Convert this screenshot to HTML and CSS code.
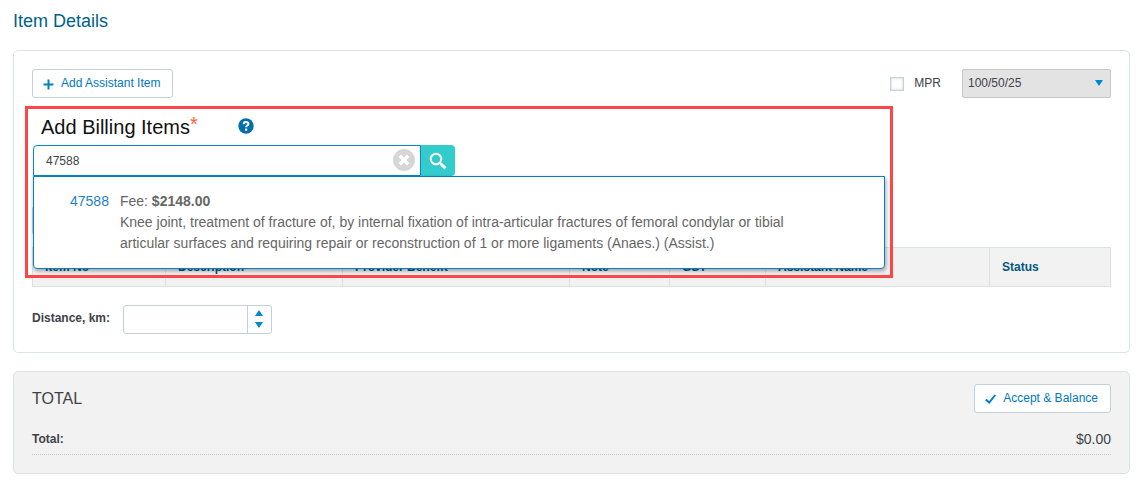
FILE: index.html
```html
<!DOCTYPE html>
<html lang="en">
<head>
  <meta charset="UTF-8" />
  <meta name="viewport" content="width=device-width, initial-scale=1.0" />
  <title>Item Details</title>
  <link rel="stylesheet" href="styles.css">
</head>
<body>
  <h1>Item Details</h1>

  <section class="panel">
    <div class="toolbar">
      <button type="button" class="btn">
        <svg width="11" height="11" viewBox="0 0 11 11"><path d="M5.5 0.5v10M0.5 5.5h10" stroke="#0082c3" stroke-width="2" /></svg>
        Add Assistant Item
      </button>
      <div class="mpr">
        <input type="checkbox" id="mpr" />
        <label for="mpr">MPR</label>
        <div class="select-wrap">
          <select id="mprRate" aria-label="MPR rate">
            <option>100/50/25</option>
          </select>
          <svg class="caret" width="8" height="6" viewBox="0 0 8 6"><path d="M0 0h8L4 6z" fill="#0088cc" /></svg>
        </div>
      </div>
    </div>

    <div class="billing">
      <div class="billing-title">
        <label for="itemSearch">Add Billing Items<span class="required">*</span></label>
        <a href="#" class="help" aria-label="Help">
          <svg width="16" height="16" viewBox="0 0 16 16">
            <circle cx="8" cy="8" r="7.7" fill="#006fae" />
            <path d="M5.7 6.2C5.7 4.7 6.6 3.9 8 3.9s2.4.8 2.4 2c0 1.6-2.3 1.6-2.3 3.4" fill="none" stroke="#fff" stroke-width="2" />
            <rect x="7" y="10.6" width="2.2" height="2.1" fill="#fff" />
          </svg>
        </a>
      </div>

      <div class="search">
        <div class="search-box">
          <input type="text" id="itemSearch" value="47588" />
          <button type="button" class="clear" aria-label="Clear">
            <svg width="22" height="22" viewBox="0 0 22 22">
              <circle cx="11" cy="11" r="11" fill="#d6d6d6" />
              <path d="M6.8 6.8l8.4 8.4M15.2 6.8l-8.4 8.4" stroke="#fff" stroke-width="3.4" />
            </svg>
          </button>
        </div>
        <button type="button" class="search-btn" aria-label="Search">
          <svg width="18" height="18" viewBox="0 0 18 18">
            <circle cx="7" cy="7" r="5.3" fill="none" stroke="#fff" stroke-width="2" />
            <path d="M10.8 10.8l1.4 1.4" stroke="#fff" stroke-width="2" />
            <path d="M11.8 11.8l4.6 4.6" stroke="#fff" stroke-width="3" />
          </svg>
        </button>

        <div class="results">
          <a href="#" class="result-code">47588</a>
          <div class="result-text">
            Fee: <strong>$2148.00</strong><br>
            Knee joint, treatment of fracture of, by internal fixation of intra-articular fractures of femoral condylar or tibial articular surfaces and requiring repair or reconstruction of 1 or more ligaments (Anaes.) (Assist.)
          </div>
        </div>
      </div>
    </div>

    <div class="table-tools"></div>

    <table>
      <thead>
        <tr>
          <th class="col-item">Item No</th>
          <th class="col-desc">Description</th>
          <th class="col-benefit">Provider Benefit</th>
          <th class="col-note">Note</th>
          <th class="col-gst">GST</th>
          <th class="col-assistant">Assistant Name</th>
          <th>Status</th>
        </tr>
      </thead>
    </table>

    <div class="distance">
      <label for="distance">Distance, km:</label>
      <div class="spinner">
        <input type="number" id="distance" />
        <div class="spinner-btns">
          <button type="button" aria-label="Increase"><svg width="8" height="6" viewBox="0 0 8 6"><path d="M0 6h8L4 0z" fill="#0088cc" /></svg></button>
          <button type="button" aria-label="Decrease"><svg width="8" height="6" viewBox="0 0 8 6"><path d="M0 0h8L4 6z" fill="#0088cc" /></svg></button>
        </div>
      </div>
    </div>
  </section>

  <section class="panel total">
    <div class="total-head">
      <h2>TOTAL</h2>
      <button type="button" class="btn">
        <svg width="11" height="10" viewBox="0 0 11 10"><path d="M0.8 5.4l3.4 3.2L10.2 1" fill="none" stroke="#0082c3" stroke-width="2" /></svg>
        Accept &amp; Balance
      </button>
    </div>
    <div class="total-row">
      <strong>Total:</strong>
      <span>$0.00</span>
    </div>
  </section>
</body>
</html>
```
FILE: styles.css
```css
* {
  box-sizing: border-box;
}
body {
  margin: 0;
  padding: 10px 8px 10px 13px;
  font-family: "Liberation Sans", Arial, sans-serif;
  font-size: 12px;
  color: #404248;
  background: #fff;
}
h1 {
  margin: 0 0 18px;
  font-size: 18px;
  font-weight: normal;
  line-height: 22px;
  color: #005f8d;
}
input, select, button {
  font-family: inherit;
  font-size: 12px;
  color: inherit;
  margin: 0;
}
svg {
  display: block;
}
.panel {
  border: 1px solid #dae3e9;
  border-radius: 5px;
  padding: 18px;
}
.toolbar, .mpr, .total-head, .total-row, .distance {
  display: flex;
  align-items: center;
}
.toolbar, .total-head, .total-row {
  justify-content: space-between;
}
.btn {
  display: flex;
  align-items: center;
  gap: 7px;
  height: 29px;
  padding: 0 12px 2px 10px;
  background: #fff;
  border: 1px solid #c3d0da;
  border-radius: 3px;
  color: #0078bd;
}
.btn svg {
  margin-top: 3px;
}
.mpr input {
  appearance: none;
  width: 14px;
  height: 14px;
  margin-right: 10px;
  background: #fff;
  border: 1px solid #c5d2dc;
  box-shadow: inset 0 0 3px #ccc;
}
.mpr label {
  padding-bottom: 2px;
}
.select-wrap {
  position: relative;
  margin-left: 21px;
}
.select-wrap select {
  appearance: none;
  display: block;
  width: 149px;
  height: 29px;
  padding: 0 5px 2px;
  background: #e3e3e3;
  border: 1px solid #c4c8cb;
  border-radius: 2px;
}
.caret {
  position: absolute;
  right: 8px;
  top: 11px;
  pointer-events: none;
}

/* item search */
.billing {
  position: relative;
  width: 868px;
  max-width: 100%;
  margin: 8px 0 0 -7px;
  padding: 9px 8px 0;
}
.billing::after {
  content: "";
  position: absolute;
  inset: 0 0 -102px;
  border: 3px solid #ff4545;
  z-index: 3;
  pointer-events: none;
}
.billing-title {
  display: flex;
  align-items: center;
  gap: 40px;
  height: 24px;
  margin-bottom: 6px;
  padding-left: 8px;
  font-size: 20px;
  color: #111;
}
.required {
  color: #ff6238;
  line-height: 0;
  vertical-align: 3px;
}
.help {
  padding-bottom: 2px;
}
.search {
  position: relative;
  display: flex;
}
.search-box {
  position: relative;
  width: 388px;
}
.search-box input {
  display: block;
  width: 100%;
  height: 31px;
  padding: 0 36px 0 12px;
  border: 1px solid #008bcb;
  border-radius: 4px 0 0 0;
  outline: none;
}
.clear {
  position: absolute;
  right: 6px;
  top: 4px;
  padding: 0;
  border: 0;
  background: none;
}
.search-btn {
  width: 34px;
  height: 31px;
  padding: 0 8px;
  border: 0;
  border-radius: 0 4px 4px 0;
  background: #33cccc;
}
.results {
  position: absolute;
  top: 100%;
  left: 0;
  right: 0;
  z-index: 2;
  display: flex;
  gap: 11px;
  padding: 14px 80px 14px 36px;
  background: #fff;
  border: 1px solid #0082c3;
  border-radius: 0 0 4px 4px;
  box-shadow: 1px 2px 4px rgba(0, 0, 0, 0.35);
  font-size: 14px;
  line-height: 21px;
  color: #666;
}
.result-code {
  color: #1f7fc4;
  text-decoration: none;
}

.table-tools {
  width: 240px;
  height: 29px;
  margin: 30px 0 12px;
  border: 1px solid #c3d0da;
  border-radius: 3px;
}
table {
  width: 100%;
  border-collapse: collapse;
  table-layout: fixed;
}
th {
  height: 39px;
  padding: 0 12px;
  background: #f2f2f2;
  border: 1px solid #dae0e5;
  color: #005581;
  text-align: left;
}
.col-item { width: 133px; }
.col-desc { width: 177px; }
.col-benefit { width: 227px; }
.col-note { width: 100px; }
.col-gst { width: 96px; }
.col-assistant { width: 224px; }

.distance {
  gap: 13px;
  margin-top: 18px;
}
.distance label {
  font-weight: bold;
  padding-bottom: 4px;
}
.spinner {
  display: flex;
  width: 149px;
  height: 29px;
  border: 1px solid #c3d0da;
  border-radius: 3px;
}
.spinner input {
  appearance: textfield;
  flex: 1;
  min-width: 0;
  border: 0;
  background: none;
}
.spinner-btns {
  display: flex;
  flex-direction: column;
  justify-content: center;
  gap: 6px;
  width: 24px;
  padding-bottom: 2px;
  border-left: 1px solid #c3d0da;
}
.spinner-btns button {
  padding: 0 7px;
  border: 0;
  background: none;
}

.total {
  margin-top: 18px;
  padding-top: 12px;
  background: #f2f2f2;
}
h2 {
  margin: 0;
  font-size: 16px;
  font-weight: normal;
}
.total-row {
  height: 32px;
  margin-top: 10px;
  border-bottom: 1px dotted #b9cbd7;
}
.total-row span {
  font-size: 14px;
}
```
